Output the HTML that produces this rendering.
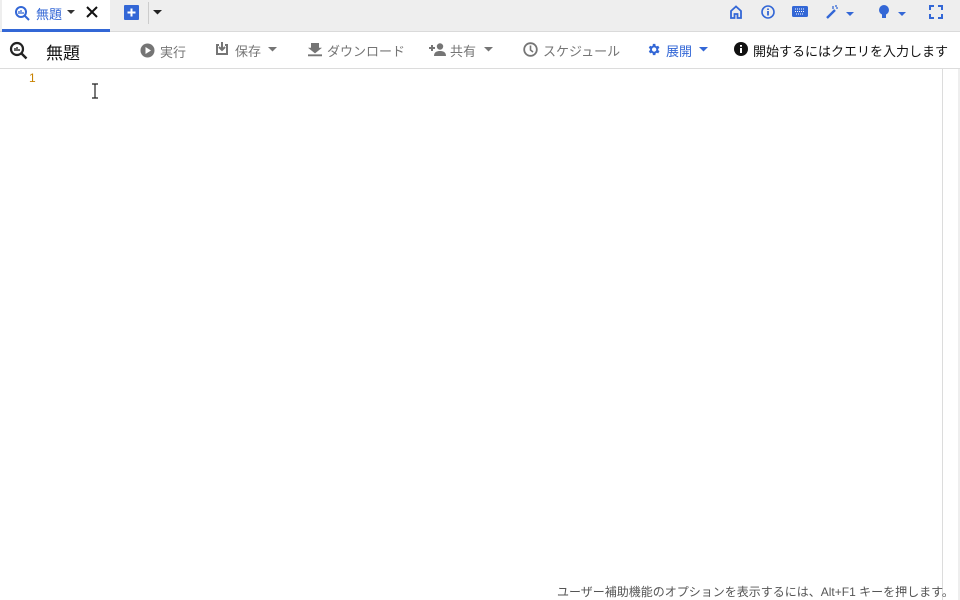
<!DOCTYPE html>
<html><head><meta charset="utf-8"><style>
*{margin:0;padding:0;box-sizing:border-box}
body{width:960px;height:600px;overflow:hidden;background:#fff;font-family:"Liberation Sans","Noto Sans CJK JP",sans-serif;position:relative}
.tabs{position:absolute;left:0;top:0;width:960px;height:32px;background:#eeeeee;border-bottom:1px solid #dadada}
.tab{position:absolute;left:2px;top:0;width:108px;height:32px;background:#fff;border-bottom:3px solid #3367d6}
.t{position:absolute;font-size:13px;white-space:nowrap}
.tb{position:absolute;left:0;top:32px;width:960px;height:37px;border-bottom:1px solid #dcdcdc}
.g{color:#757575;font-size:13px}
svg{position:absolute}
</style></head><body>
<div class="tabs">
 <div class="tab"></div>
 <svg style="left:14px;top:5px" width="16" height="16" viewBox="0 0 16 16"><circle cx="7" cy="7" r="5" fill="none" stroke="#3367d6" stroke-width="2"/><path d="M11 11l4 4" stroke="#3367d6" stroke-width="2"/><path d="M5 6v3M7 5v4M9 7v2" stroke="#3367d6" stroke-width="1.3"/></svg>
 <div class="t" style="left:36px;top:4px;color:#3367d6;font-size:13px">無題</div>
 <svg style="left:67px;top:10px" width="8" height="5"><path d="M0 0h8L4 4z" fill="#333"/></svg>
 <svg style="left:86px;top:6px" width="12" height="12"><path d="M1 1l10 10M11 1L1 11" stroke="#111" stroke-width="2"/></svg>
 <div style="position:absolute;left:124px;top:5px;width:15px;height:15px;background:#3367d6;border-radius:1px"></div>
 <svg style="left:124px;top:5px" width="15" height="15"><path d="M7.5 3.5v8M3.5 7.5h8" stroke="#fff" stroke-width="2"/></svg>
 <div style="position:absolute;left:148px;top:2px;width:1px;height:22px;background:#ccc"></div>
 <svg style="left:153px;top:10px" width="9" height="5"><path d="M0 0h9L4.5 4.5z" fill="#222"/></svg>
 <svg style="left:729px;top:5px" width="14" height="14" viewBox="0 0 14 14"><path d="M2 6L7 1.5 12 6V13H8.5V9h-3v4H2z" fill="none" stroke="#3367d6" stroke-width="1.8"/></svg>
 <svg style="left:761px;top:5px" width="14" height="14"><circle cx="7" cy="7" r="6" fill="none" stroke="#3367d6" stroke-width="1.6"/><path d="M7 6v4.5M7 3.5v1.5" stroke="#3367d6" stroke-width="1.8"/></svg>
 <svg style="left:792px;top:6px" width="16" height="12"><rect width="16" height="11" rx="1.5" fill="#3367d6"/><path d="M3 3h10M3 5.5h10M4 8h8" stroke="#fff" stroke-width="1" stroke-dasharray="1 1"/></svg>
 <svg style="left:825px;top:4px" width="30" height="16"><path d="M2 14L10 6" stroke="#3367d6" stroke-width="2.4"/><path d="M8 2v3M11 1v2M13 4h-2" stroke="#3367d6" stroke-width="1.3"/><path d="M21 8h8l-4 4z" fill="#3367d6"/></svg>
 <svg style="left:877px;top:4px" width="30" height="16"><circle cx="7" cy="6" r="5" fill="#3367d6"/><rect x="5" y="10" width="4" height="4" fill="#3367d6"/><path d="M21 8h8l-4 4z" fill="#3367d6"/></svg>
 <svg style="left:929px;top:5px" width="14" height="14"><path d="M1 5V1h4M9 1h4v4M13 9v4H9M5 13H1V9" fill="none" stroke="#3367d6" stroke-width="2"/></svg>
</div>
<div class="tb">
 <svg style="left:9px;top:9px" width="19" height="19" viewBox="0 0 19 19"><circle cx="8" cy="8" r="6" fill="none" stroke="#222" stroke-width="2.2"/><path d="M12.5 12.5l5 5" stroke="#222" stroke-width="2.4"/><path d="M6 7v3M8 6v4M10 8v2" stroke="#222" stroke-width="1.4"/></svg>
 <div class="t" style="left:46px;top:7px;font-size:17px;color:#111">無題</div>
 <svg style="left:140px;top:11px" width="15" height="15"><circle cx="7.5" cy="7.5" r="7" fill="#757575"/><path d="M5.5 4v7l5.5-3.5z" fill="#fff"/></svg>
 <div class="t g" style="left:160px;top:10px">実行</div>
 <svg style="left:215px;top:9px" width="14" height="15"><path d="M1 3v11h12V3h-3v2h1v7H3V5h1V3z" fill="#757575"/><path d="M7 1v7M4 6l3 3 3-3" stroke="#757575" stroke-width="2" fill="none"/></svg>
 <div class="t g" style="left:235px;top:9px">保存</div>
 <svg style="left:268px;top:15px" width="9" height="5"><path d="M0 0h9L4.5 4.5z" fill="#757575"/></svg>
 <svg style="left:308px;top:10px" width="14" height="15"><path d="M3 1h8v5h3L7 12 0 6h3zM0 13h14v2H0z" fill="#757575" transform="scale(1 .95)"/></svg>
 <div class="t g" style="left:327px;top:9px">ダウンロード</div>
 <svg style="left:429px;top:11px" width="17" height="13"><path d="M0 5h6M3 2v6" stroke="#757575" stroke-width="2"/><circle cx="11" cy="3.5" r="3.2" fill="#757575"/><path d="M5 13c0-4 3-5 6-5s6 1 6 5z" fill="#757575"/></svg>
 <div class="t g" style="left:450px;top:9px">共有</div>
 <svg style="left:484px;top:15px" width="9" height="5"><path d="M0 0h9L4.5 4.5z" fill="#757575"/></svg>
 <svg style="left:523px;top:10px" width="15" height="15"><circle cx="7.5" cy="7.5" r="6.3" fill="none" stroke="#757575" stroke-width="1.8"/><path d="M7.5 3.5v4.5l2.5 2" stroke="#757575" stroke-width="1.6" fill="none"/></svg>
 <div class="t g" style="left:543px;top:9px">スケジュール</div>
 <svg style="left:646px;top:10px" width="15" height="15" viewBox="0 0 24 24"><path fill="#3367d6" d="M19.4 13a7.5 7.5 0 000-2l2.1-1.6-2-3.5-2.5 1a7 7 0 00-1.7-1L15 3h-4l-.4 2.9a7 7 0 00-1.7 1l-2.5-1-2 3.5L6.6 11a7.5 7.5 0 000 2l-2.1 1.6 2 3.5 2.5-1a7 7 0 001.7 1L11 21h4l.4-2.9a7 7 0 001.7-1l2.5 1 2-3.5zM13 15.5A3.5 3.5 0 1113 8.5a3.5 3.5 0 010 7z"/></svg>
 <div class="t" style="left:666px;top:9px;font-size:13px;color:#3367d6">展開</div>
 <svg style="left:699px;top:15px" width="9" height="5"><path d="M0 0h9L4.5 4.5z" fill="#3367d6"/></svg>
 <svg style="left:734px;top:10px" width="14" height="14"><circle cx="7" cy="7" r="7" fill="#111"/><path d="M7 6v5M7 3v1.8" stroke="#fff" stroke-width="2"/></svg>
 <div class="t" style="left:753px;top:9px;font-size:13px;color:#111">開始するにはクエリを入力します</div>
</div>
<div class="t" style="left:29px;top:71px;font-size:12px;color:#c88200">1</div>
<svg style="left:91px;top:83px" width="8" height="16"><path d="M1 1h6M4 1v14M1 15h6" stroke="#222" stroke-width="1.2"/></svg>
<div style="position:absolute;left:942px;top:69px;width:1px;height:531px;background:#dcdcdc"></div>
<div style="position:absolute;left:958px;top:69px;width:2px;height:531px;background:#eee"></div>
<div class="t" style="left:557px;top:583px;font-size:12px;color:#555">ユーザー補助機能のオプションを表示するには、Alt+F1 キーを押します。</div>
</body></html>
